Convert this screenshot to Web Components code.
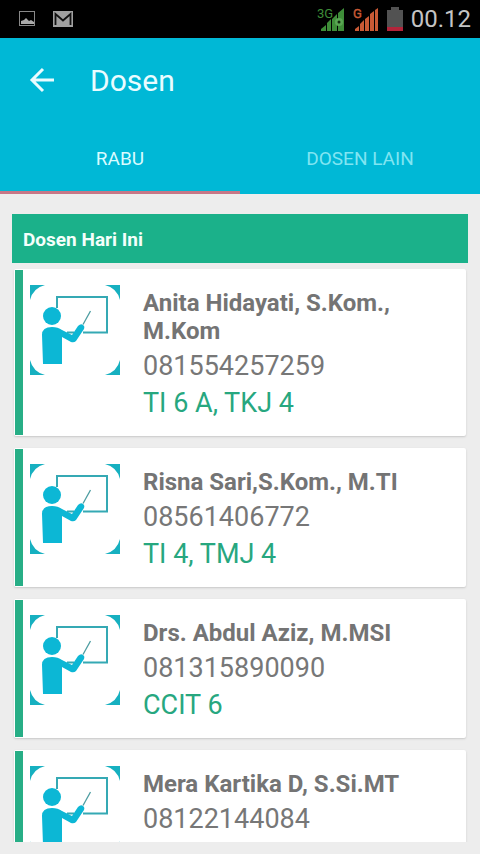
<!DOCTYPE html>
<html lang="id">
<head>
<meta charset="utf-8">
<meta name="viewport" content="width=device-width, initial-scale=1">
<title>Dosen</title>
<style>
body { margin: 0; font-family: Roboto, "Noto Sans", sans-serif; }
</style>
</head>
<body>
<dosen-app></dosen-app>
<script>
const define = (name, markup) => {
  const template = document.createElement('template');
  template.innerHTML = markup;
  customElements.define(name, class extends HTMLElement {
    constructor() {
      super();
      this.attachShadow({ mode: 'open' }).append(template.content.cloneNode(true));
    }
  });
};

define('status-bar', `
<style>
:host { display: flex; align-items: center; height: 38px; padding: 0 9px 0 18px; background: #000; color: #c4c4c4; }
svg { display: block; flex: none; }
.left { display: flex; gap: 17px; flex: 1; align-items: center; }
.right { display: flex; align-items: center; gap: 8px; }
time { font-size: 24px; line-height: 28px; }
.signal text { font-size: 13px; font-family: Roboto, sans-serif; }
</style>
<div class="left">
  <svg width="18" height="18" viewBox="0 0 18 18"><rect x="1.5" y="1.5" width="15" height="14" fill="none" stroke="#888"/><path d="M3 14v-3l3-1 2-2 3 3 2-1 3 2v2z" fill="#aaa"/></svg>
  <svg width="20" height="16" viewBox="0 0 20 16"><path d="M0 0h20v16H0z" fill="#a0a0a0"/><path d="M2.500 14V3l7.500 6.500L17.500 3v11" fill="none" stroke="#111" stroke-width="1.800"/></svg>
</div>
<div class="right">
  <svg class="signal" width="28" height="26" viewBox="0 0 28 26"><text x="0" y="12" fill="#3e8d38">3G</text><path d="M4 25v-2l5-4v6zM10 25v-8l4-4v12zM15 25V13l5-5v17zM21 25V7l6-5v23z" fill="#3e8d38"/><circle cx="22" cy="16" r="4" fill="#5aa653"/><circle cx="22" cy="16" r="1.500" fill="#102b0e"/></svg>
  <svg class="signal" width="26" height="26" viewBox="0 0 26 26"><text x="0" y="12" fill="#ca5a35" stroke="#ca5a35" stroke-width=".4">G</text><path d="M2 25v-2l4-3v5zM7 25v-7l4-4v11zM12 25V13l4-3v15zM17 25V8l4-3v20zM22 25V4l3-2v23z" fill="#ca5a35"/></svg>
  <svg width="16" height="24" viewBox="0 0 16 24"><path d="M4 0h8v3h4v21H0V3h4z" fill="#525252"/><path d="M0 20h16v4H0z" fill="#b3243a"/></svg>
  <time>00.12</time>
</div>`);

define('app-bar', `
<style>
:host { display: flex; align-items: center; height: 84px; padding: 0 28px; gap: 32px; color: #eafcff; }
button { display: block; padding: 0; border: 0; background: none; color: inherit; }
svg { display: block; }
h1 { margin: 0; padding-top: 2px; font-size: 30px; line-height: 36px; font-weight: 400; }
</style>
<button type="button" aria-label="Kembali"><svg width="30" height="30" viewBox="0 0 30 30" fill="none" stroke="currentColor" stroke-width="3"><path d="M26 15H5M15 4 4 15l11 11"/></svg></button>
<h1><slot></slot></h1>`);

define('tab-bar', `
<style>
:host { display: flex; height: 72px; }
::slotted(tab-item) { flex: 1; }
</style>
<slot></slot>`);

define('tab-item', `
<style>
:host { display: flex; color: #80e5f2; }
:host([selected]) { color: #d9fbff; }
button { flex: 1; padding: 4px 0 0; border: 0; border-bottom: 3px solid transparent; background: none; color: inherit; font: 400 19px/24px Roboto, sans-serif; }
:host([selected]) button { border-bottom-color: #c77787; }
</style>
<button type="button" role="tab"><slot></slot></button>`);

define('section-title', `
<style>
:host { display: block; padding: 14px 11px 11px; background: #1bb18a; color: #f4fffb; }
h2 { margin: 0; font-size: 19px; line-height: 24px; font-weight: 700; }
</style>
<h2><slot></slot></h2>`);

define('teacher-icon', `
<style>
:host { display: block; width: 90px; height: 90px; }
svg { display: block; }
</style>
<svg width="90" height="90" viewBox="0 0 90 90" aria-hidden="true">
  <path d="M0 0h15Q3 3 0 15zM90 0v15Q87 3 75 0zM0 90V75q3 12 15 15zM90 90H75q12-3 15-15z" fill="#16b0c0"/>
  <path d="M27 23V12h50v35.500H53M44 47.500h-7" fill="none" stroke="#35a9b4" stroke-width="2"/>
  <circle cx="22" cy="31" r="9" fill="#0cb7d5"/>
  <path d="M13 79 12 50Q12 42 22 42q6 0 10 3l10 5 6-9q3-3 5-1 2 1 1 4l-8 12q-2 2-5 1l-9-5V79z" fill="#0cb7d5"/>
  <path d="M53 39.500 60.500 26" stroke="#4b9ca0" stroke-width="1.300"/>
</svg>`);

define('lecturer-card', `
<style>
:host { display: flex; padding: 1px; background: #fff; border-radius: 2px; box-shadow: 0 1px 2px #c8c8c8; }
.bar { flex: none; width: 8px; background: #27ae86; }
teacher-icon { flex: none; margin: 15px 23px 0 7px; }
.info { flex: 1; min-width: 0; padding: 19px 20px 13px 0; }
h3 { margin: 0 0 3px; font-size: 24px; line-height: 28px; font-weight: 700; color: #747474; }
p { margin: 0; font-size: 27px; line-height: 37px; color: #777; }
.kelas { color: #27a77f; }
</style>
<div class="bar"></div>
<teacher-icon></teacher-icon>
<div class="info">
  <h3><slot name="nama"></slot></h3>
  <p><slot name="telepon"></slot></p>
  <p class="kelas"><slot name="kelas"></slot></p>
</div>`);

define('dosen-app', `
<style>
:host { display: flex; flex-direction: column; height: 100vh; overflow: hidden; background: #ededed; }
header { flex: none; background: #00b8d6; }
main { flex: 1; min-height: 0; display: flex; flex-direction: column; gap: 6px; padding: 20px 12px 12px; }
.list { flex: 1; min-height: 0; overflow: hidden; padding: 0 2px; display: flex; flex-direction: column; gap: 12px; }
section-title, lecturer-card, status-bar { flex: none; }
</style>
<status-bar></status-bar>
<header>
  <app-bar>Dosen</app-bar>
  <tab-bar role="tablist"><tab-item selected>RABU</tab-item><tab-item>DOSEN LAIN</tab-item></tab-bar>
</header>
<main>
  <section-title>Dosen Hari Ini</section-title>
  <div class="list">
    <lecturer-card><span slot="nama">Anita Hidayati, S.Kom., M.Kom</span><span slot="telepon">081554257259</span><span slot="kelas">TI 6 A, TKJ 4</span></lecturer-card>
    <lecturer-card><span slot="nama">Risna Sari,S.Kom., M.TI</span><span slot="telepon">08561406772</span><span slot="kelas">TI 4, TMJ 4</span></lecturer-card>
    <lecturer-card><span slot="nama">Drs. Abdul Aziz, M.MSI</span><span slot="telepon">081315890090</span><span slot="kelas">CCIT 6</span></lecturer-card>
    <lecturer-card><span slot="nama">Mera Kartika D, S.Si.MT</span><span slot="telepon">08122144084</span></lecturer-card>
  </div>
</main>`);
</script>
</body>
</html>
